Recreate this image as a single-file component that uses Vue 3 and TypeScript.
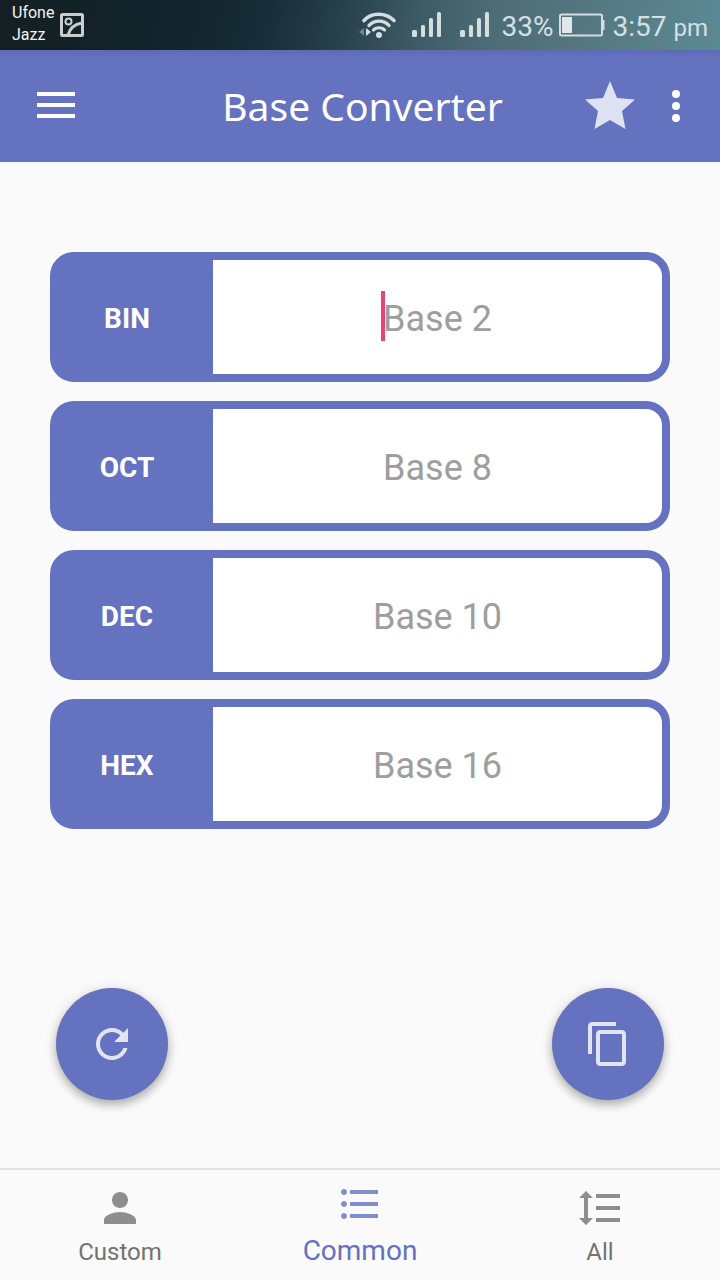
<script setup lang="ts">
import { reactive, ref } from 'vue'

interface BaseField {
  id: string
  label: string
  hint: string
}

interface Tab {
  name: string
  path: string
}

const fields: BaseField[] = [
  { id: 'bin', label: 'BIN', hint: 'Base 2' },
  { id: 'oct', label: 'OCT', hint: 'Base 8' },
  { id: 'dec', label: 'DEC', hint: 'Base 10' },
  { id: 'hex', label: 'HEX', hint: 'Base 16' },
]

const tabs: Tab[] = [
  {
    name: 'Custom',
    path: 'M12 12c2.21 0 4-1.79 4-4s-1.79-4-4-4-4 1.79-4 4 1.79 4 4 4zm0 2c-2.67 0-8 1.34-8 4v2h16v-2c0-2.66-5.33-4-8-4z',
  },
  {
    name: 'Common',
    path: 'M4 10.5c-.83 0-1.5.67-1.5 1.5s.67 1.5 1.5 1.5 1.5-.67 1.5-1.5-.67-1.5-1.5-1.5zm0-6c-.83 0-1.5.67-1.5 1.5S3.17 7.5 4 7.5 5.5 6.83 5.5 6 4.83 4.5 4 4.5zm0 12c-.83 0-1.5.67-1.5 1.5s.67 1.5 1.5 1.5 1.5-.67 1.5-1.5-.67-1.5-1.5-1.5zM7 19h14v-2H7v2zm0-6h14v-2H7v2zm0-8v2h14V5H7z',
  },
  {
    name: 'All',
    path: 'M6 7h2.5L5 3.5 1.5 7H4v10H1.5L5 20.5 8.5 17H6V7zm4-2v2h12V5H10zm0 14h12v-2H10v2zm0-6h12v-2H10v2z',
  },
]

const activeTab = ref('Common')
const activeField = ref('bin')
const values = reactive<Record<string, string>>({ bin: '', oct: '', dec: '', hex: '' })

function clearAll() {
  for (const field of fields) values[field.id] = ''
}

function copyValue() {
  void navigator.clipboard?.writeText(values[activeField.value])
}
</script>

<template>
  <div class="screen">
    <div class="status">
      <div class="carriers">
        <span>Ufone</span>
        <span>Jazz</span>
      </div>
      <svg class="picture" width="24" height="24" viewBox="0 0 24 24" aria-hidden="true">
        <g fill="none" stroke="#c9cdce">
          <rect x="1.5" y="1.5" width="21" height="21" rx="1" stroke-width="3" />
          <circle cx="8.5" cy="8.5" r="3" stroke-width="2" />
          <path d="M8 22C10 15 15 11 22 10" stroke-width="3" />
        </g>
      </svg>
      <div class="indicators">
        <svg class="wifi" width="38" height="28" viewBox="0 0 38 28" aria-hidden="true">
          <g fill="none" stroke="#d3dee1" stroke-linecap="round">
            <path d="M5 9.500C12 1.200 27 1.200 35 9.500" stroke-width="3.600" />
            <path d="M10 14.500C15 8.600 25 8.600 30 14.500" stroke-width="3.400" />
            <path d="M14.500 19C17 16 23 16 25.500 19" stroke-width="3.200" />
          </g>
          <circle cx="20" cy="24" r="3" fill="#d3dee1" />
          <path d="M5 17v8l-5-4z" fill="#71838b" />
          <path d="M7 17v8l5-4z" fill="#d3dee1" />
        </svg>
        <svg v-for="sim in 2" :key="sim" class="signal" width="30" height="26" viewBox="0 0 30 26" aria-hidden="true">
          <g fill="#d3dee1">
            <rect x="0" y="18" width="5" height="7" rx="1.500" />
            <rect x="9" y="13" width="4" height="12" rx="1.500" />
            <rect x="17" y="6" width="4" height="19" rx="1.500" />
            <rect x="25" y="0" width="4" height="25" rx="1.500" />
          </g>
        </svg>
        <span class="percent">33%</span>
        <svg class="battery" width="46" height="24" viewBox="0 0 46 24" aria-hidden="true">
          <rect x="1" y="1.500" width="42" height="21" rx="1.500" fill="none" stroke="#d3dee1" stroke-width="2" />
          <rect x="3" y="4" width="10" height="16" fill="#dfe7e9" />
          <path d="M43 7h2.500v10H43z" fill="#d3dee1" />
        </svg>
        <span class="clock">3:57 <small>pm</small></span>
      </div>
    </div>

    <header class="bar">
      <button class="icon-button" type="button" aria-label="Open menu">
        <svg width="48" height="48" viewBox="0 0 48 48">
          <path d="M5 10h38v4H5zM5 21h38v4H5zM5 32h38v4H5z" fill="#fff" />
        </svg>
      </button>
      <h1>Base Converter</h1>
      <button class="icon-button" type="button" aria-label="Favourite">
        <svg width="50" height="50" viewBox="0 0 50 50">
          <path d="M25 0l7 17 18 1.500-13 11.500L40.500 48 25 39 9.500 48 13 30 0 18.500 18 17z" fill="#dfe2f2" />
        </svg>
      </button>
      <button class="icon-button more" type="button" aria-label="More options">
        <svg width="32" height="48" viewBox="0 0 32 48">
          <g fill="#fff">
            <circle cx="16" cy="12" r="4" />
            <circle cx="16" cy="24" r="4" />
            <circle cx="16" cy="36" r="4" />
          </g>
        </svg>
      </button>
    </header>

    <main>
      <form class="fields" @submit.prevent>
        <div v-for="field in fields" :key="field.id" class="field">
          <label :for="field.id">{{ field.label }}</label>
          <div class="entry">
            <input
              :id="field.id"
              v-model="values[field.id]"
              type="text"
              autocomplete="off"
              :placeholder="field.hint"
              @focus="activeField = field.id"
            />
            <span v-if="activeField === field.id && !values[field.id]" class="caret"></span>
          </div>
        </div>
      </form>
      <div class="actions">
        <button class="fab" type="button" aria-label="Clear values" @click="clearAll">
          <svg width="48" height="48" viewBox="0 0 24 24">
            <path
              d="M17.65 6.35C16.2 4.9 14.21 4 12 4c-4.42 0-7.99 3.580-7.99 8s3.570 8 7.990 8c3.730 0 6.840-2.550 7.730-6h-2.080c-.82 2.330-3.040 4-5.650 4-3.310 0-6-2.690-6-6s2.690-6 6-6c1.660 0 3.140.69 4.220 1.780L13 11h7V4l-2.350 2.350z"
              fill="#e1e4f3"
            />
          </svg>
        </button>
        <button class="fab" type="button" aria-label="Copy value" @click="copyValue">
          <svg width="48" height="48" viewBox="0 0 24 24">
            <path
              d="M16 1H4c-1.100 0-2 .9-2 2v14h2V3h12V1zm3 4H8c-1.100 0-2 .9-2 2v14c0 1.100.9 2 2 2h11c1.100 0 2-.9 2-2V7c0-1.100-.9-2-2-2zm0 16H8V7h11v14z"
              fill="#e1e4f3"
            />
          </svg>
        </button>
      </div>
    </main>

    <nav class="tabs">
      <button
        v-for="tab in tabs"
        :key="tab.name"
        type="button"
        class="tab"
        :class="{ active: tab.name === activeTab }"
        @click="activeTab = tab.name"
      >
        <svg width="48" height="48" viewBox="0 0 24 24" aria-hidden="true">
          <path :d="tab.path" fill="currentColor" />
        </svg>
        <span>{{ tab.name }}</span>
      </button>
    </nav>
  </div>
</template>

<style>
body {
  background: #fafafa;
}
</style>

<style scoped>
.screen {
  min-height: 100vh;
  display: flex;
  flex-direction: column;
  background: #fafafa;
  font-family: Roboto, "Liberation Sans", sans-serif;
}

button {
  border: 0;
  padding: 0;
  background: none;
  font-family: inherit;
  cursor: pointer;
}

svg {
  display: block;
  flex: none;
}

.status {
  height: 50px;
  box-sizing: border-box;
  padding: 0 12px;
  display: flex;
  align-items: center;
  color: #d5e0e3;
  background: linear-gradient(100deg, #131f22 0%, #12242d 25%, #182d38 37%, #29424d 48%, #3e5b65 58%, #4c6c76 68%, #54777f 80%, #5b8994 100%);
}

.carriers {
  display: flex;
  flex-direction: column;
  padding-bottom: 2px;
  color: #f2f4f4;
  font-size: 16px;
  line-height: 22px;
  margin-right: 6px;
}

.indicators {
  margin-left: auto;
  display: flex;
  align-items: center;
  font-size: 28px;
  line-height: 48px;
}

.wifi {
  margin-right: 15px;
}

.signal {
  margin-right: 18px;
}

.percent {
  margin-left: -6px;
  padding-top: 4px;
}

.battery {
  margin: 0 8px 0 5px;
}

.clock {
  padding-top: 4px;
}

.clock small {
  font-size: 24px;
}

.bar {
  height: 112px;
  box-sizing: border-box;
  padding: 0 28px 0 32px;
  display: flex;
  align-items: center;
  background: linear-gradient(#5f6ab4, #6572c0 8px);
}

.bar h1 {
  flex: 1;
  margin: 0;
  padding-left: 60px;
  text-align: center;
  color: #fff;
  font-family: "Noto Sans", "Open Sans", sans-serif;
  font-size: 39px;
  font-weight: 400;
  line-height: 56px;
}

.more {
  margin-left: 25px;
}

main {
  flex: 1;
  display: flex;
  flex-direction: column;
  justify-content: space-between;
  padding: 90px 50px 68px;
}

.fields {
  display: flex;
  flex-direction: column;
  gap: 19px;
}

.field {
  height: 130px;
  box-sizing: border-box;
  display: flex;
  border: 8px solid #6572c0;
  border-radius: 24px;
  background: #6572c0;
}

.field label {
  width: 155px;
  box-sizing: border-box;
  padding: 2px 17px 0 0;
  display: flex;
  align-items: center;
  justify-content: center;
  color: #fff;
  font-size: 28px;
  font-weight: 700;
}

.entry {
  position: relative;
  flex: 1;
  display: flex;
}

.entry input {
  width: 100%;
  min-width: 0;
  box-sizing: border-box;
  border: 0;
  border-radius: 0 16px 16px 0;
  outline: 0;
  padding: 4px 0 0;
  background: #fff;
  color: #333;
  caret-color: transparent;
  font-family: inherit;
  font-size: 36px;
  text-align: center;
}

.entry input::placeholder {
  color: #9e9e9e;
  opacity: 1;
}

.caret {
  position: absolute;
  top: 31px;
  left: calc(50% - 57px);
  width: 4px;
  height: 50px;
  background: #ec407a;
}

.actions {
  display: flex;
  justify-content: space-between;
  margin: 0 6px;
}

.fab {
  width: 112px;
  height: 112px;
  display: flex;
  align-items: center;
  justify-content: center;
  border-radius: 50%;
  background: #6572c0;
  box-shadow: 0 5px 8px rgba(0, 0, 0, 0.24), 0 2px 14px rgba(0, 0, 0, 0.12);
}

.tabs {
  height: 112px;
  box-sizing: border-box;
  display: flex;
  border-top: 2px solid #e3e3e3;
}

.tab {
  flex: 1 1 0;
  display: flex;
  flex-direction: column;
  align-items: center;
  padding-top: 14px;
  color: #737373;
  font-size: 24px;
  line-height: 40px;
}

.tab svg {
  color: #8e8e8e;
}

.tab.active {
  padding-top: 10px;
  color: #6572c0;
  font-size: 28px;
  line-height: 46px;
}

.tab.active svg {
  color: #838dcb;
}
</style>
